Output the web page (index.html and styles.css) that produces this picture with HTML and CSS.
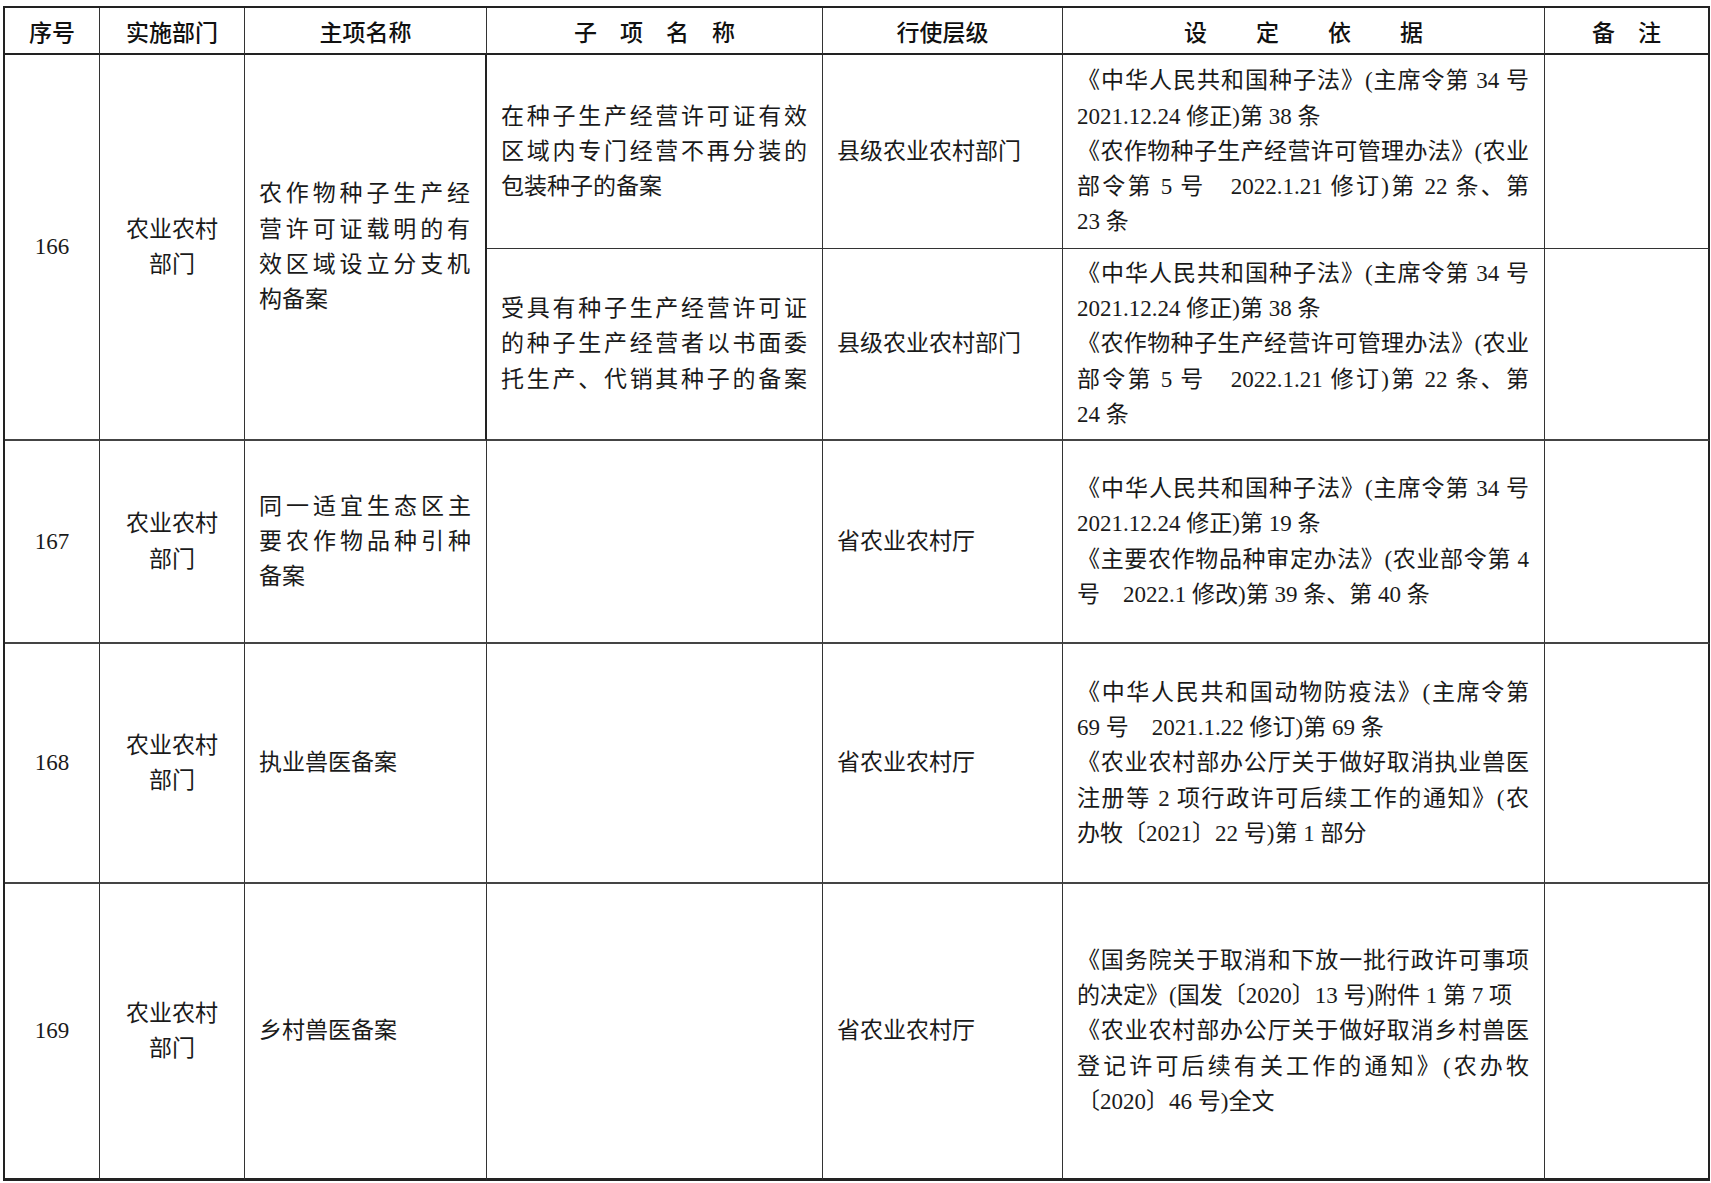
FILE: index.html
```html
<!DOCTYPE html>
<html lang="zh-CN">
<head>
<meta charset="utf-8">
<title>备案事项目录</title>
<link rel="stylesheet" href="styles.css">
</head>
<body>
<div class="sheet">
  <div class="cell hd">序号</div>
  <div class="cell hd">实施部门</div>
  <div class="cell hd">主项名称</div>
  <div class="cell hd">子　项　名　称</div>
  <div class="cell hd">行使层级</div>
  <div class="cell hd"><span class="wide">设定依据</span></div>
  <div class="cell hd last">备　注</div>

  <!-- 166 -->
  <div class="cell ctr span2 end">166</div>
  <div class="cell ctr span2 end"><span class="l">农业农村</span><span class="l">部门</span></div>
  <div class="cell txt span2 end dark">
    <span class="j">农作物种子生产经</span>
    <span class="j">营许可证载明的有</span>
    <span class="j">效区域设立分支机</span>
    <span class="e">构备案</span>
  </div>
  <div class="cell txt">
    <span class="j">在种子生产经营许可证有效</span>
    <span class="j">区域内专门经营不再分装的</span>
    <span class="e">包装种子的备案</span>
  </div>
  <div class="cell txt">县级农业农村部门</div>
  <div class="cell txt">
    <span class="j">《中华人民共和国种子法》(主席令第 34 号</span>
    <span class="e">2021.12.24 修正)第 38 条</span>
    <span class="j">《农作物种子生产经营许可管理办法》(农业</span>
    <span class="j">部令第 5 号　2022.1.21 修订)第 22 条、第</span>
    <span class="e">23 条</span>
  </div>
  <div class="cell last"></div>

  <div class="cell txt end">
    <span class="j">受具有种子生产经营许可证</span>
    <span class="j">的种子生产经营者以书面委</span>
    <span class="j">托生产、代销其种子的备案</span>
  </div>
  <div class="cell txt end">县级农业农村部门</div>
  <div class="cell txt end">
    <span class="j">《中华人民共和国种子法》(主席令第 34 号</span>
    <span class="e">2021.12.24 修正)第 38 条</span>
    <span class="j">《农作物种子生产经营许可管理办法》(农业</span>
    <span class="j">部令第 5 号　2022.1.21 修订)第 22 条、第</span>
    <span class="e">24 条</span>
  </div>
  <div class="cell last end"></div>

  <!-- 167 -->
  <div class="cell ctr end">167</div>
  <div class="cell ctr end"><span class="l">农业农村</span><span class="l">部门</span></div>
  <div class="cell txt end">
    <span class="j">同一适宜生态区主</span>
    <span class="j">要农作物品种引种</span>
    <span class="e">备案</span>
  </div>
  <div class="cell txt end"></div>
  <div class="cell txt end">省农业农村厅</div>
  <div class="cell txt end">
    <span class="j">《中华人民共和国种子法》(主席令第 34 号</span>
    <span class="e">2021.12.24 修正)第 19 条</span>
    <span class="j">《主要农作物品种审定办法》(农业部令第 4</span>
    <span class="e">号　2022.1 修改)第 39 条、第 40 条</span>
  </div>
  <div class="cell last end"></div>

  <!-- 168 -->
  <div class="cell ctr end">168</div>
  <div class="cell ctr end"><span class="l">农业农村</span><span class="l">部门</span></div>
  <div class="cell txt end">执业兽医备案</div>
  <div class="cell txt end"></div>
  <div class="cell txt end">省农业农村厅</div>
  <div class="cell txt end">
    <span class="j">《中华人民共和国动物防疫法》(主席令第</span>
    <span class="e">69 号　2021.1.22 修订)第 69 条</span>
    <span class="j">《农业农村部办公厅关于做好取消执业兽医</span>
    <span class="j">注册等 2 项行政许可后续工作的通知》(农</span>
    <span class="e">办牧〔2021〕22 号)第 1 部分</span>
  </div>
  <div class="cell last end"></div>

  <!-- 169 -->
  <div class="cell ctr bottom">169</div>
  <div class="cell ctr bottom"><span class="l">农业农村</span><span class="l">部门</span></div>
  <div class="cell txt bottom">乡村兽医备案</div>
  <div class="cell txt bottom"></div>
  <div class="cell txt bottom">省农业农村厅</div>
  <div class="cell txt bottom">
    <span class="j">《国务院关于取消和下放一批行政许可事项</span>
    <span class="e">的决定》(国发〔2020〕13 号)附件 1 第 7 项</span>
    <span class="j">《农业农村部办公厅关于做好取消乡村兽医</span>
    <span class="j">登记许可后续有关工作的通知》(农办牧</span>
    <span class="e">〔2020〕46 号)全文</span>
  </div>
  <div class="cell last bottom"></div>
</div>
</body>
</html>
```

FILE: styles.css
```css
html, body {
  margin: 0;
  padding: 0;
  background: #ffffff;
}

body {
  font-family: "Liberation Serif", "Noto Sans CJK SC", serif;
  font-size: 23px;
  color: #1a1a1a;
}

.sheet {
  display: grid;
  grid-template-columns: 95px 145px 242px 336px 240px 482px 165px;
  grid-template-rows: 47px 194px 192px 203px 240px 297px;
  width: max-content;
  margin: 6px 0 0 3px;
  border-left: 2px solid #222;
  border-top: 2px solid #222;
}

.cell {
  box-sizing: border-box;
  border-right: 1px solid #333;
  border-bottom: 1px solid #333;
  display: flex;
  flex-direction: column;
  justify-content: center;
  line-height: 35.3px;
  padding: 0 15px 0 14px;
  min-width: 0;
}

.cell.last {
  border-right: 2px solid #222;
}

.cell.dark {
  border-right: 2px solid #222;
}

.hd {
  font-family: "Noto Sans CJK SC", sans-serif;
  font-weight: 500;
  font-size: 23px;
  color: #111;
  align-items: center;
  text-align: center;
  border-bottom: 2px solid #222;
  padding: 0;
  line-height: 30px;
}

.wide {
  letter-spacing: 49px;
  margin-right: -49px;
}

.span2 {
  grid-row: span 2;
}

.end {
  border-bottom: 2px solid #444;
}

.bottom {
  border-bottom: 3px solid #222;
}

.ctr {
  align-items: center;
  text-align: center;
  padding: 0;
}

.l {
  display: block;
}

.txt .j {
  display: block;
  text-align: justify;
  text-align-last: justify;
  white-space: nowrap;
}

.txt .e {
  display: block;
  text-align: left;
  white-space: nowrap;
}
```
